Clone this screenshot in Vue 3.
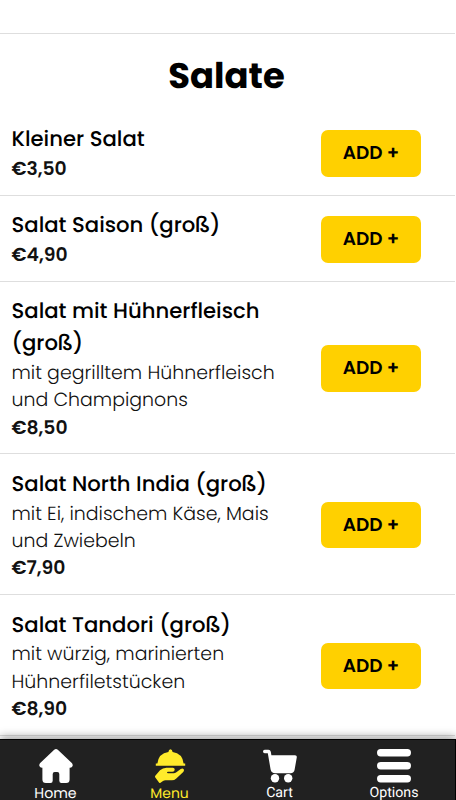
<script setup>
const items = [
  { title: 'Kleiner Salat', desc: [], price: '€3,50' },
  { title: 'Salat Saison (groß)', desc: [], price: '€4,90' },
  {
    title: 'Salat mit Hühnerfleisch (groß)',
    desc: ['mit gegrilltem Hühnerfleisch', 'und Champignons'],
    price: '€8,50'
  },
  {
    title: 'Salat North India (groß)',
    desc: ['mit Ei, indischem Käse, Mais', 'und Zwiebeln'],
    price: '€7,90'
  },
  {
    title: 'Salat Tandori (groß)',
    desc: ['mit würzig, marinierten', 'Hühnerfiletstücken'],
    price: '€8,90'
  }
]
</script>

<template>
  <div class="page">
    <main class="list">
      <div class="previous"></div>
      <h1 class="heading">Salate</h1>
      <article v-for="item in items" :key="item.title" class="item">
        <div class="info">
          <h2 class="title">{{ item.title }}</h2>
          <div v-for="l in item.desc" :key="l" class="desc">{{ l }}</div>
          <div class="price">{{ item.price }}</div>
        </div>
        <button class="add">ADD +</button>
      </article>
    </main>
    <nav class="nav">
      <a class="tab home">
        <svg class="icon" viewBox="0 0 34 34"><path d="M15.2 .8Q17-.7 18.8 .8L32.8 14Q34 15.2 33.6 17Q33 18.7 31.1 18.7H30.6V30.5Q30.6 34 27.1 34H22.5Q20.3 34 20.3 31.8V25Q20.3 23 18.3 23H15.7Q13.7 23 13.7 25V31.8Q13.7 34 11.5 34H6.9Q3.4 34 3.4 30.5V18.7H2.9Q1 18.7 .4 17Q0 15.2 1.2 14Z" /></svg>
        <span class="label">Home</span>
      </a>
      <a class="tab menu">
        <svg class="icon" viewBox="0 0 34 34"><path d="M13.4 3.1Q13.8 .2 15.5 .2Q17.2 .2 17.6 3.1Q27.5 4.5 28.6 14.6H30.2V16.8H.8V14.6H2.4Q3.5 4.5 13.4 3.1Z" /><path d="M.3 26.7L5 21.2Q8 18.5 12 18.7H17.8Q19.8 18.8 19.7 20.8Q19.6 22.6 17.5 22.7H13Q12 22.8 12 23.6Q12 24.3 13 24.3H18.8Q20 24.3 21 23.5L25.7 20Q27.7 18.7 28.7 20.3Q29.5 21.7 28 23.2L21 29.7Q19.3 31.2 17 31.2H10.5Q9 31.2 8 32L5.5 33.8Q4.7 34.3 4 33.4L.3 28.5Q-.3 27.5 .3 26.7Z" /></svg>
        <span class="label">Menu</span>
      </a>
      <a class="tab cart">
        <svg class="icon" viewBox="0 0 34 34"><path d="M1.7 .8H5.4Q7.4 .8 7.8 2.8L8.4 6.2H32Q34 6.2 33.8 8.2L31.6 20.8Q31 24.2 27.5 24.2H12.2Q8.4 24.2 7.6 20.4L4.8 4.3H1.7Q0 4.3 0 2.5Q0 .8 1.7 .8Z" /><circle cx="12" cy="29.3" r="4.2" /><circle cx="25.2" cy="29.3" r="4.2" /></svg>
        <span class="label">Cart</span>
      </a>
      <a class="tab options">
        <svg class="icon" viewBox="0 0 34 34"><rect y="0" width="34" height="7.4" rx="3.7" /><rect y="13" width="34" height="7.4" rx="3.7" /><rect y="26" width="34" height="7.4" rx="3.7" /></svg>
        <span class="label">Options</span>
      </a>
    </nav>
  </div>
</template>

<style>
body {
  background: #fff;
}
</style>

<style scoped>
.page {
  display: flex;
  flex-direction: column;
  width: 456px;
  height: 800px;
  overflow: hidden;
  color: #000;
  font-family: Poppins, Inter, "Liberation Sans", sans-serif;
  text-rendering: geometricPrecision;
}
.list {
  flex: 0 0 739px;
  width: 455px;
  overflow: hidden;
}
.previous {
  box-sizing: border-box;
  height: 34px;
  border-bottom: 1px solid #dedede;
}
.heading {
  margin: 0;
  height: 75.6px;
  box-sizing: border-box;
  padding: 15px 2px 0 0;
  text-align: center;
  font-size: 35.4px;
  line-height: 56px;
  font-weight: 700;
}
.item {
  display: flex;
  justify-content: space-between;
  align-items: center;
  box-sizing: border-box;
  padding: 14px 34px 12px 11.5px;
  border-bottom: 1px solid #dedede;
}
.info {
  width: 275px;
}
.title {
  margin: 0;
  font-size: 21.2px;
  line-height: 31.5px;
  font-weight: 500;
  padding-top: 0.8px;
  margin-bottom: -0.8px;
}
.desc {
  font-size: 18.95px;
  line-height: 27.45px;
  font-weight: 300;
  color: #111;
  white-space: nowrap;
}
.price {
  font-size: 18.8px;
  line-height: 27.5px;
  font-weight: 600;
  color: #111;
}
.add {
  width: 100px;
  height: 46.5px;
  margin: 0.5px 0 0;
  padding: 0;
  border: 0;
  border-radius: 7px;
  background: #ffd000;
  color: #000;
  font: 600 18.5px/47.5px Poppins, Inter, sans-serif;
  text-rendering: geometricPrecision;
}
.nav {
  position: relative;
  display: grid;
  grid-template-columns: 111px 117px 103px 124px;
  box-sizing: border-box;
  height: 61px;
  border-top: 1px solid #000;
  border-right: 1px solid #000;
  background: #212121;
  box-shadow: 0 -2px 9px rgba(0, 0, 0, 0.4);
}
.tab {
  display: flex;
  flex-direction: column;
  align-items: center;
  padding-top: 9px;
  color: #fff;
  font-size: 14.2px;
}
.menu {
  color: #ffeb2b;
  font-size: 13.9px;
}
.menu .icon {
  margin-left: 4px;
}
.cart,
.options {
  font-family: Roboto, sans-serif;
}
.options {
  padding-left: 2px;
}
.icon {
  flex: none;
  width: 34px;
  height: 34px;
  fill: currentColor;
}
.label {
  height: 17px;
  line-height: 20px;
}
.cart .label,
.options .label {
  line-height: 21px;
}
</style>
